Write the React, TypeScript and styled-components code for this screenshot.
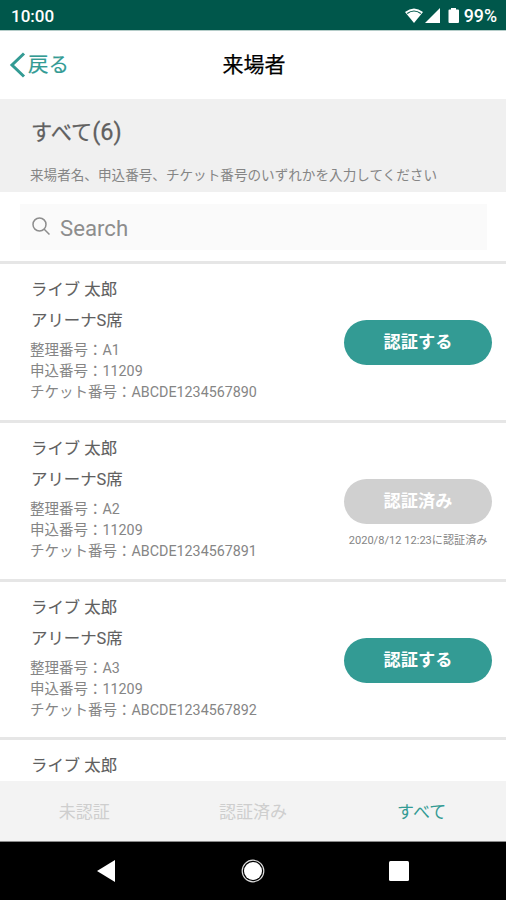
import React from 'react';
import styled, { createGlobalStyle } from 'styled-components';

const teal = '#339b94';

const GlobalStyle = createGlobalStyle`
  * { box-sizing: border-box; }
  body { margin: 0; background: #fff; }
  button { font: inherit; border: 0; padding: 0; background: none; }
`;

const Screen = styled.div`
  display: flex;
  flex-direction: column;
  width: 506px;
  height: 900px;
  overflow: hidden;
  background: #fff;
  color: #606060;
  font-family: Roboto, 'Noto Sans CJK JP', sans-serif;
  white-space: nowrap;
`;

const StatusBar = styled.div`
  display: flex;
  flex: none;
  align-items: center;
  justify-content: space-between;
  height: 30px;
  padding: 2px 9px 0 11px;
  background: #00574b;
  color: #fff;
  font: 500 17px/28px Roboto, sans-serif;
`;

const StatusIcons = styled.div`
  display: flex;
  align-items: center;
  svg { display: block; }
`;

const Percent = styled.span`
  margin-left: 4px;
  font-size: 17.8px;
`;

const Header = styled.header`
  display: grid;
  flex: none;
  grid-template-columns: 1fr auto 1fr;
  align-items: center;
  height: 69px;
  padding: 0 9px;
  border-top: 1px solid #b5cdc9;
`;

const Back = styled.button`
  display: flex;
  align-items: center;
  color: ${teal};
  font-size: 20.5px;
  line-height: 30px;
  -webkit-text-stroke: 0.2px ${teal};
  svg { display: block; margin-right: 2px; }
`;

const Title = styled.h1`
  margin: 0 0 0 2px;
  color: #000;
  font-size: 21px;
  font-weight: 400;
  line-height: 30px;
  -webkit-text-stroke: 0.25px #000;
`;

const Summary = styled.section`
  flex: none;
  height: 93px;
  padding: 18px 30px 0 31px;
  background: #f0f0f0;
`;

const Count = styled.h2`
  height: 30px;
  margin: 0;
  font-size: 21.2px;
  font-weight: 400;
  line-height: 30px;
  -webkit-text-stroke: 0.25px #606060;
`;

const CountNumber = styled.span`
  font-size: 23.5px;
`;

const Hint = styled.p`
  margin: 18px 0 0 -1px;
  color: #858585;
  font-size: 13.6px;
  line-height: 20px;
`;

const SearchArea = styled.div`
  flex: none;
  height: 69px;
  padding: 12px 19px 0 20px;
`;

const SearchBox = styled.div`
  display: flex;
  align-items: center;
  height: 46px;
  padding: 2px 12px 0;
  background: #fafafa;
  color: #8d8d8d;
  font-size: 22.2px;
  svg { display: block; margin: -3px 9px 0 0; }
`;

const List = styled.main`
  flex: 1;
  min-height: 0;
  overflow: hidden;
`;

const Row = styled.article`
  display: flex;
  justify-content: space-between;
  height: 158.8px;
  padding: 13px 14px 0 31px;
  border-top: 3px solid #e6e6e6;
`;

const Primary = styled.div`
  height: 31px;
  font-size: 16.4px;
  line-height: 26px;
  -webkit-text-stroke: 0.1px #606060;
`;

const Details = styled.div`
  margin: 1px 0 0 -1px;
  color: #858585;
  font-size: 14.5px;
  line-height: 21.2px;
`;

const Latin = styled.span`
  font-size: 14.3px;
`;

const Action = styled.div`
  display: flex;
  flex-direction: column;
  align-items: center;
  width: 148px;
  padding-top: 43px;
`;

const Pill = styled.button<{ $done?: boolean }>`
  width: 148px;
  height: 45px;
  border-radius: 23px;
  background: ${p => (p.$done ? '#d0d0d0' : teal)};
  color: #fff;
  font-size: 17.2px;
  font-weight: 700;
  line-height: 45px;
`;

const Stamp = styled.div`
  margin-top: 7px;
  color: #858585;
  font-size: 11.1px;
  line-height: 20px;
`;

const Tabs = styled.nav`
  display: grid;
  flex: none;
  grid-template-columns: repeat(3, 1fr);
  height: 61px;
  border-bottom: 1px solid #8a8a8a;
  background: #f3f3f3;
`;

const Tab = styled.button<{ $active?: boolean }>`
  padding-top: 2px;
  color: ${p => (p.$active ? teal : '#cecece')};
  font-size: 17px;
  line-height: 58px;
`;

const NavBar = styled.footer`
  display: grid;
  flex: none;
  grid-template-columns: 1fr 82px 1fr;
  align-items: center;
  height: 58px;
  background: #000;
  svg { display: block; justify-self: center; }
  svg:first-child { justify-self: end; margin-right: 97px; }
  svg:last-child { justify-self: start; margin-left: 95px; }
`;

const visitors = [
  { name: 'ライブ 太郎', seat: 'アリーナS席', order: 'A1', entry: '11209', ticket: 'ABCDE1234567890', done: '' },
  { name: 'ライブ 太郎', seat: 'アリーナS席', order: 'A2', entry: '11209', ticket: 'ABCDE1234567891', done: '2020/8/12 12:23に認証済み' },
  { name: 'ライブ 太郎', seat: 'アリーナS席', order: 'A3', entry: '11209', ticket: 'ABCDE1234567892', done: '' },
];

export default function App() {
  return (
    <Screen lang="ja">
      <GlobalStyle />
      <StatusBar>
        <span>10:00</span>
        <StatusIcons>
          <svg width="55" height="18" viewBox="0 0 55 18" fill="#fff">
            <path d="M0 5Q9-2 18 5L9 16Z" />
            <path d="M2.200 6.500Q9 1.500 15.800 6.500" fill="none" stroke="#00574b" strokeWidth="1.200" />
            <path d="M20 16L35 1V16Z" />
            <path d="M46 1H51V2.500H53Q54 2.500 54 3.500V15Q54 16 53 16H44.500Q43.500 16 43.500 15V3.500Q43.500 2.500 44.500 2.500H46Z" />
          </svg>
          <Percent>99%</Percent>
        </StatusIcons>
      </StatusBar>
      <Header>
        <Back>
          <svg width="17" height="26" viewBox="0 0 17 26" fill="none" stroke={teal} strokeWidth="3">
            <path d="M15 1.500L3 13L15 24.500" />
          </svg>
          戻る
        </Back>
        <Title>来場者</Title>
      </Header>
      <Summary>
        <Count>すべて<CountNumber>(6)</CountNumber></Count>
        <Hint>来場者名、申込番号、チケット番号のいずれかを入力してください</Hint>
      </Summary>
      <SearchArea>
        <SearchBox>
          <svg width="19" height="19" viewBox="0 0 19 19" fill="none" stroke="#8d8d8d" strokeWidth="1.500">
            <circle cx="7.500" cy="7.500" r="6.500" />
            <path d="M12 12L17.500 17.500" />
          </svg>
          Search
        </SearchBox>
      </SearchArea>
      <List>
        {visitors.map(v => (
          <Row key={v.ticket}>
            <div>
              <Primary>{v.name}</Primary>
              <Primary>{v.seat}</Primary>
              <Details>
                <div>整理番号：<Latin>{v.order}</Latin></div>
                <div>申込番号：<Latin>{v.entry}</Latin></div>
                <div>チケット番号：<Latin>{v.ticket}</Latin></div>
              </Details>
            </div>
            <Action>
              <Pill $done={!!v.done}>{v.done ? '認証済み' : '認証する'}</Pill>
              {v.done && <Stamp>{v.done}</Stamp>}
            </Action>
          </Row>
        ))}
        <Row>
          <Primary>ライブ 太郎</Primary>
        </Row>
      </List>
      <Tabs>
        <Tab>未認証</Tab>
        <Tab>認証済み</Tab>
        <Tab $active>すべて</Tab>
      </Tabs>
      <NavBar>
        <svg width="18" height="22" viewBox="0 0 18 22" fill="#fff"><path d="M0 11L18 0V22Z" /></svg>
        <svg width="24" height="24" viewBox="0 0 24 24">
          <circle cx="12" cy="12" r="10.800" fill="none" stroke="#ddd" strokeWidth="1.200" />
          <circle cx="12" cy="12" r="9" fill="#fff" />
        </svg>
        <svg width="20" height="20" viewBox="0 0 20 20"><rect width="20" height="20" rx="1.500" fill="#fff" /></svg>
      </NavBar>
    </Screen>
  );
}
